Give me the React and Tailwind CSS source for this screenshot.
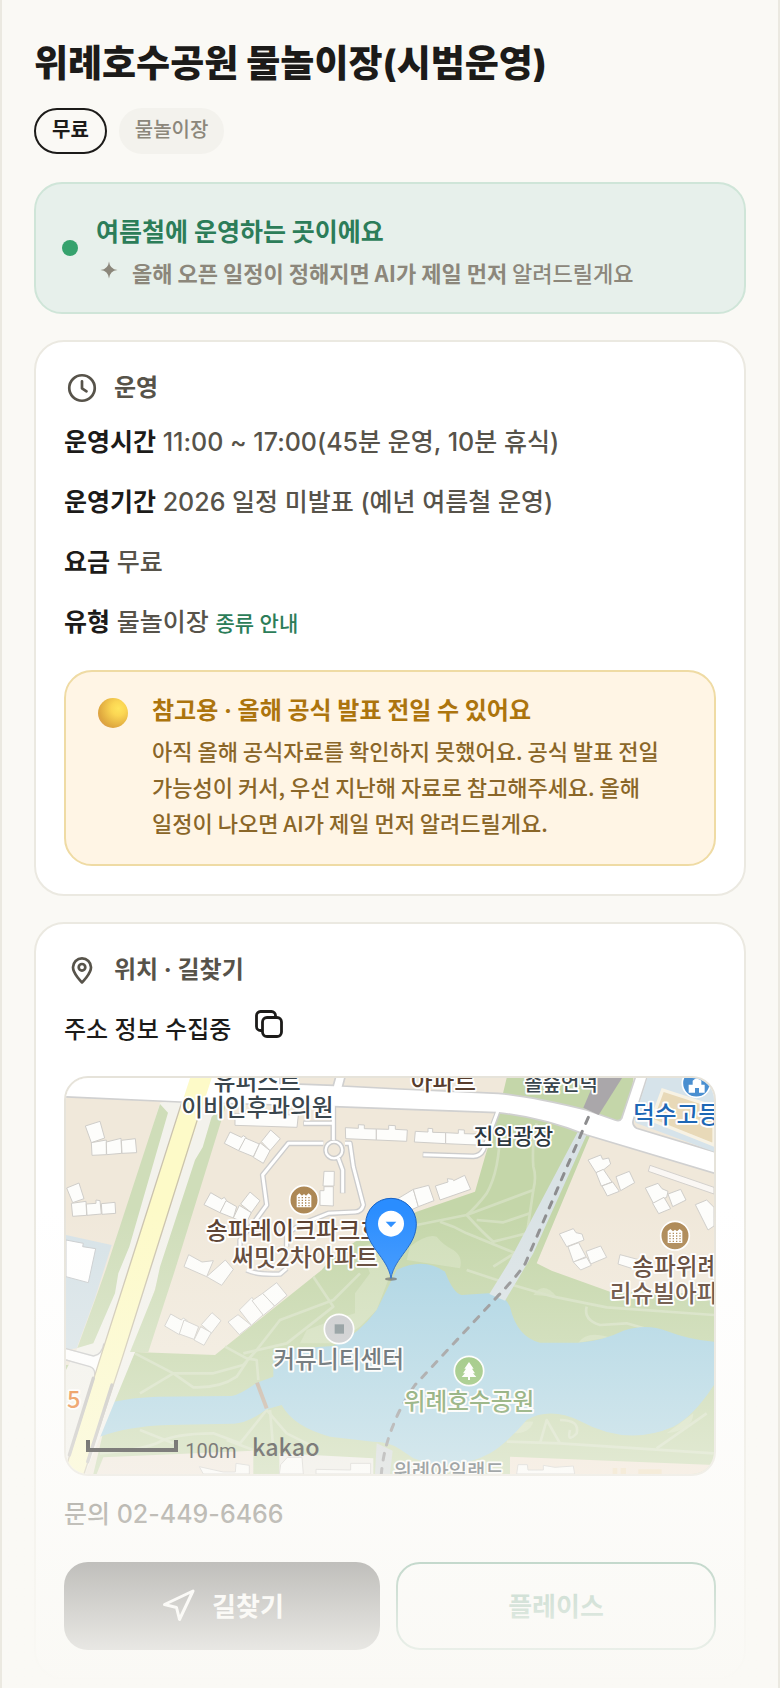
import { Navigation } from 'lucide-react';

const HOURS = [
  { label: '운영시간', value: '11:00 ~ 17:00(45분 운영, 10분 휴식)' },
  { label: '운영기간', value: '2026 일정 미발표 (예년 여름철 운영)' },
  { label: '요금', value: '무료' },
  { label: '유형', value: '물놀이장', link: '종류 안내' },
];

// Building footprints on the map, each one a closed outline
const BUILDINGS = [
  'M136 198 L180 184 L194 234 L154 248 Z',
  'M154 248 L199 240 L199 284 L156 286 Z',
  'M199 246 L243 235 L245 280 L200 284 Z',
  'M244 241 L286 236 L290 278 L246 280 Z',
  'M80 384 L117 369 L122 385 L132 416 L98 428 Z',
  'M94 430 L138 424 L140 466 L98 469 Z',
  'M139 432 L168 430 L168 420 L180 422 L184 462 L141 466 Z',
  'M184 431 L225 427 L227 460 L186 463 Z',
  'M570 216 L604 232 L610 227 L619 233 L596 272 L553 250 Z',
  'M616 234 L658 252 L640 290 L596 272 Z',
  'M692 210 L721 236 L690 272 L664 245 Z',
  'M660 248 L690 272 L670 310 L640 292 Z',
  'M512 398 L545 417 L553 412 L560 422 L540 458 L492 434 Z',
  'M558 422 L590 440 L580 474 L540 458 Z',
  'M630 396 L660 422 L634 458 L602 432 Z',
  'M598 436 L634 458 L618 490 L580 474 Z',
  'M585 160 L775 165 L771 202 L585 196 Z',
  'M852 334 L883 334 L882 378 L849 378 Z',
  'M852 380 L880 380 L880 438 L840 436 L840 392 L852 392 Z',
  'M916 203 L955 205 L955 194 L973 195 L973 206 L1009 207 L1009 240 L917 236 Z',
  'M1009 207 L1046 208 L1046 196 L1066 197 L1066 208 L1102 210 L1100 244 L1009 240 Z',
  'M1126 214 L1164 216 L1164 205 L1178 206 L1178 217 L1217 218 L1217 251 L1123 246 Z',
  'M1217 218 L1255 220 L1255 209 L1273 210 L1273 221 L1310 222 L1310 255 L1217 251 Z',
  'M1070 418 L1120 388 L1135 440 L1100 456 Z',
  'M1120 388 L1166 376 L1182 422 L1135 440 Z',
  'M1186 378 L1224 366 L1222 356 L1238 358 L1241 362 L1274 346 L1292 388 L1200 420 Z',
  'M1644 300 L1682 285 L1688 298 L1706 294 L1712 312 L1690 330 L1668 338 Z',
  'M1668 338 L1690 328 L1716 366 L1684 378 Z',
  'M1686 378 L1718 366 L1738 394 L1702 408 Z',
  'M1728 350 L1768 334 L1784 368 L1742 392 Z',
  'M1816 384 L1854 370 L1866 386 L1884 394 L1880 412 L1840 430 Z',
  'M1838 430 L1872 412 L1892 446 L1856 461 Z',
  'M1884 402 L1922 388 L1938 420 L1898 440 Z',
  'M1966 434 L2000 420 L2022 442 L2022 498 L2004 510 Z',
  'M1558 522 L1600 506 L1608 518 L1626 522 L1632 540 L1580 560 Z',
  'M1584 560 L1616 548 L1638 590 L1600 606 Z',
  'M1638 574 L1682 558 L1700 592 L1652 612 Z',
  'M1600 606 L1640 592 L1654 616 L1622 630 Z',
  'M1740 584 L1800 600 L1790 630 L1734 612 Z',
  'M392 762 L424 780 L430 774 L442 782 L418 824 L374 798 Z',
  'M432 780 L476 800 L462 838 L418 822 Z',
  'M516 758 L543 782 L514 820 L484 794 Z',
  'M482 800 L514 818 L492 856 L462 840 Z',
  'M446 584 L486 606 L520 602 L500 650 L432 620 Z',
  'M500 650 L545 676 L580 628 L556 600 Z',
  'M564 786 L594 764 L634 796 L598 824 Z',
  'M598 750 L636 712 L670 764 L634 796 Z',
  'M636 722 L668 700 L704 738 L670 766 Z',
  'M668 700 L710 668 L741 706 L704 738 Z',
  'M718 1242 L722 1214 L742 1192 L786 1192 L790 1242 Z',
  'M828 1242 L828 1228 L932 1230 L932 1210 L992 1210 L992 1242 Z',
  'M478 1220 L550 1236 L586 1236 L588 1210 L628 1216 L628 1242 L490 1242 Z',
  'M1430 1242 L1434 1214 L1462 1214 L1464 1230 L1510 1230 L1510 1216 L1545 1222 L1600 1218 L1604 1242 Z',
];

const TRAILS = [
  'M1380 200 Q1380 330 1340 400 Q1310 440 1280 465 L1130 495',
  'M1280 465 L1480 390 Q1490 350 1480 320 Q1475 250 1490 190',
  'M1280 465 Q1330 520 1360 545 L1460 520',
  'M1310 480 L1390 487 L1470 460',
  'M1480 390 L1455 560 L1360 620',
  'M1200 485 L1240 500 L1280 520 L1440 585',
  'M1280 630 L1400 670 L1540 710 L1700 742 L2022 765',
  'M1640 740 Q1630 780 1680 795 L1760 790 L1830 810',
  'M285 880 L400 940 L520 940 L610 915 L650 870 L720 780 L880 720 L960 640',
  'M300 1000 L400 940 L460 982 Q540 985 590 950 L620 905',
  'M555 860 L620 895 L650 900 L655 960',
  'M610 880 L740 850 L880 740 L820 650',
  'M180 1180 Q300 1170 350 1150 Q400 1120 520 1120 L600 1150 L680 1050 L740 1120 L820 1160',
  'M300 1110 L400 1150 M560 1140 L640 1170 M690 1050 L700 1170',
  'M1400 1145 L1560 1150 L2022 1180',
  'M1500 1150 L1520 1080 L1560 1150 M1560 1080 Q1620 1080 1610 1120 Q1580 1150 1590 1110 M1850 1165 L2000 1060',
];

const LABELS = [
  { text: '유퍼스트', x: 652, y: 90, size: 71, fill: '#3a464d' },
  { text: '이비인후과의원', x: 652, y: 168, size: 71, fill: '#3a464d' },
  { text: '아파트', x: 1210, y: 90, size: 71, fill: '#573c2c' },
  { text: '솔숲언덕', x: 1563, y: 94, size: 60, fill: '#3a464d' },
  { text: '진입광장', x: 1420, y: 252, size: 65, fill: '#2d383f' },
  { text: '써밋2차아파트', x: 795, y: 617, size: 72, fill: '#573c2c' },
  { text: '커뮤니티센터', x: 896, y: 925, size: 71, fill: '#3a464d' },
  { text: '위례호수공원', x: 1287, y: 1051, size: 71, fill: '#5f8c43' },
  { text: '위례아일랜드', x: 1226, y: 1257, size: 60, fill: '#3a464d' },
  { text: '송파레이크파크호', x: 497, y: 537, size: 72, fill: '#573c2c', anchor: 'start' },
  { text: '송파위례', x: 1777, y: 644, size: 71, fill: '#573c2c', anchor: 'start' },
  { text: '리슈빌아파트', x: 1709, y: 725, size: 71, fill: '#573c2c', anchor: 'start' },
  { text: '덕수고등학교', x: 1779, y: 190, size: 71, fill: '#1d67b5', anchor: 'start' },
  { text: '5', x: 101, y: 1045, size: 71, fill: '#e8731c' },
];

function ApartmentMarker({ x, y }) {
  return (
    <g transform={`translate(${x} ${y})`}>
      <circle r="43" fill="#ad8855" stroke="#fff" strokeWidth="5" />
      <path d="M-22 22 V-13 L-14 -20 L-6 -13 L0 -18 L6 -13 L14 -20 L22 -13 V22 Z" fill="#fff" />
      <path
        d="M-17 -7 H18 M-17 1 H18 M-17 9 H18 M-17 17 H18"
        stroke="#ad8855"
        strokeWidth="4"
        strokeDasharray="4 6"
      />
    </g>
  );
}

function KakaoMap() {
  return (
    <svg
      viewBox="78 54 1944 1188"
      preserveAspectRatio="xMidYMid slice"
      className="block h-full w-full"
      role="img"
      aria-label="위례호수공원 지도"
    >
      <rect x="78" y="54" width="1944" height="1188" fill="#f0e8da" />

      {/* Parks */}
      <g fill="#c4d6a9">
        <path d="M1400 54 L1780 54 L1760 240 L1655 215 L1490 610 L1535 632 L1710 695 L2022 702 V1242 H160 L210 1030 L285 876 L525 885 L845 630 L870 600 L945 545 L1060 490 L1130 455 L1305 395 L1335 290 L1375 158 Z" />
        <path d="M78 915 Q110 910 125 930 L105 985 L78 1010 Z" />
      </g>
      <g fill="#d0deb9">
        <path d="M960 560 L1040 540 L1060 620 L1010 750 L960 800 L880 850 L780 850 L800 810 L880 780 L945 760 L945 700 L990 640 Z" />
        <path d="M1110 560 Q1160 520 1190 530 Q1210 555 1240 570 Q1270 590 1260 625 L1100 600 Z" />
        <path d="M1480 705 Q1510 660 1550 710 Z" />
        <path d="M1615 848 Q1640 810 1710 832 Z" />
        <path d="M1420 1120 Q1430 1080 1480 1085 Q1470 1120 1420 1120 Z" />
        <path d="M1880 1120 Q1960 1110 1960 1060 Z" />
      </g>
      <g fill="none" stroke="#d3dfbf" strokeWidth="8" strokeLinejoin="round">
        {TRAILS.map((d) => (
          <path key={d} d={d} />
        ))}
      </g>

      {/* Lots on the bottom edge */}
      <path d="M190 1192 L640 1172 V1242 H170 Z" fill="#f0e6da" />
      <path d="M718 1180 L1000 1195 V1242 H718 Z" fill="#eeece6" />
      <path d="M1410 1190 L2022 1215 V1242 H1410 Z" fill="#f2e4d4" />
      <path d="M1718 1224 H1732 V1242 H1718 Z M1742 1224 H1758 V1242 H1742 Z M1795 1228 H1865 V1242 H1795 Z" fill="#efdcb8" />

      {/* Lake */}
      <path
        d="M78 1060 L205 1028 Q280 1012 350 1010 L575 1008 Q600 1004 650 968 L700 950 L700 870 L880 858 Q960 820 1010 750 Q1040 690 1070 630 Q1150 590 1215 635 Q1240 700 1265 705 L1345 700 Q1390 700 1410 740 Q1430 830 1500 848 L1615 848 Q1690 842 1750 812 Q1820 790 1880 813 Q1950 840 2022 845 V975 Q1960 1070 1900 1100 Q1760 1160 1620 1083 Q1530 1040 1460 1080 Q1400 1150 1350 1180 Q1240 1240 1120 1195 L1080 1168 Q1050 1145 1000 1145 L870 1130 Q760 1100 725 1035 L680 1048 Q620 1092 580 1091 L380 1095 Q260 1100 180 1130 L78 1180 Z"
        fill="#a9d3e3"
      />
      <path d="M651 968 L680 1045" stroke="#bfa996" strokeWidth="12" />

      {/* Walking bridge across the lake */}
      <path d="M1615 212 L1642 220 L1480 580 L1395 722 L1348 702 L1405 610 Z" fill="#d9e2e5" />
      <path d="M1010 1150 L1058 1172 L1050 1242 L1005 1242 Z" fill="#cfd6d8" />

      {/* Left side: parking lot, verges and the main road */}
      <path d="M78 525 L215 555 L165 715 L110 865 L78 870 Z" fill="#d6e2e7" />
      <path d="M78 540 L130 550 L128 560 L167 566 L145 668 L78 650 Z" fill="#fff" stroke="#c9ccce" strokeWidth="3" />
      <path
        d="M360 128 L430 118 L540 118 L475 320 L360 640 L285 876 L135 1242 H78 V930 L112 865 L165 800 L210 640 Z"
        fill="#f3f2ec"
      />
      <path d="M360 132 L384 158 L268 560 L235 640 L225 700 L160 850 L112 864 L165 720 L197 630 Z" fill="#cfddb9" />
      <path d="M515 170 L560 130 L405 630 L325 876 L270 876 L345 690 L360 620 L465 300 L488 262 Z" fill="#cfddb9" />
      <path d="M78 868 L165 890 Q190 885 195 850 L215 880 L165 960 Q165 925 150 920 L78 898 Z" fill="#fff" />
      <path d="M78 866 L160 888 Q185 885 192 850 M78 900 L150 920 Q166 926 164 945" fill="none" stroke="#c9c9c9" strokeWidth="4" />

      {/* Streets */}
      <path
        d="M60 110 L420 126 L880 140 L1370 158 Q1500 170 1640 225 L2040 345 V280 L1790 205 Q1775 195 1780 180 L1825 40 H1790 L1745 175 Q1740 185 1725 180 L1640 150 Q1480 110 1375 100 L1080 87 L908 78 L918 40 H890 L880 76 L720 70 L720 40 L40 40 Z"
        fill="#fff"
        stroke="#d0d0d0"
        strokeWidth="5"
      />
      <path d="M450 54 H515 L330 630 L248 890 L132 1242 H78 V1225 L182 890 L265 630 Z" fill="#fdfac8" />
      <path
        d="M425 128 L265 630 L182 890 L78 1222 M478 160 L330 630 L248 890 L132 1242"
        fill="none"
        stroke="#cbc3ae"
        strokeWidth="4"
      />
      <path d="M160 955 L88 1185 M216 975 L143 1205" stroke="#c0bebb" strokeWidth="10" strokeLinecap="round" />

      {/* Lanes inside the apartment complex */}
      <g fill="none" strokeLinejoin="round">
        <path
          d="M880 140 V240 M790 190 H880 M850 250 H745 L668 345 L680 435 L640 490 L600 540 L600 590 M915 250 H930 L940 320 L970 435 Q965 455 945 456 L865 460 L790 490 L740 520 L740 560 M895 295 L908 330 V400 M1372 160 L1330 270 Q1320 288 1300 289 L1148 284 M620 630 Q650 645 720 642 L740 625"
          stroke="#ccc"
          strokeWidth="17"
        />
        <circle cx="882" cy="270" r="25" stroke="#ccc" strokeWidth="15" fill="#f0e8da" />
        <path
          d="M880 136 V240 M792 190 H880 M850 250 H745 L668 345 L680 435 L640 490 L600 540 L600 590 M915 250 H930 L940 320 L970 435 Q965 455 945 456 L865 460 L790 490 L740 520 L740 560 M895 295 L908 330 V398 M1374 152 L1330 270 Q1320 288 1300 289 L1150 284 M620 630 Q650 645 720 642 L740 625"
          stroke="#fff"
          strokeWidth="9"
        />
        <circle cx="882" cy="270" r="25" stroke="#fff" strokeWidth="7" />
      </g>
      <path d="M1830 316 L2022 382 V402 L1825 334 Z" fill="#faf7f4" stroke="#d3d0cc" strokeWidth="3" />

      <g fill="#fdfdfb" stroke="#cfcdc9" strokeWidth="3" strokeLinejoin="round">
        {BUILDINGS.map((d) => (
          <path key={d} d={d} />
        ))}
      </g>

      {/* School grounds */}
      <path d="M1822 54 H2022 V275 L1790 190 Q1782 184 1786 170 Z" fill="#d6e3ea" />
      <path d="M1868 90 L2022 140 V255 L1835 180 Z" fill="#e8d9b8" stroke="#f7f2e4" strokeWidth="10" />

      {/* Tunnel and walkway line */}
      <path d="M1668 54 H1746 L1676 165 L1630 143 Z" fill="#aaa7aa" />
      <path
        d="M1645 172 L1455 612 Q1430 650 1370 712 L1125 975 Q1080 1040 1058 1100 Q1030 1170 1024 1242"
        fill="none"
        stroke="#8c8c8e"
        strokeWidth="9"
        strokeLinecap="round"
        strokeDasharray="20 26"
      />

      {/* Place markers */}
      <ApartmentMarker x={792} y={420} />
      <ApartmentMarker x={1905} y={527} />
      <circle cx="1969" cy="70" r="42" fill="#4a8fd0" stroke="#fff" strokeWidth="5" />
      <path d="M1946 98 V74 H1958 V62 L1971 52 L1984 62 V74 H1994 V98 H1977 V84 H1965 V98 Z" fill="#fff" />
      <circle cx="897" cy="807" r="44" fill="#c6c7ca" stroke="#fff" strokeWidth="5" />
      <rect x="884" y="793" width="28" height="28" fill="#7b898d" />
      <circle cx="1287" cy="933" r="44" fill="#83b95f" stroke="#fff" strokeWidth="5" />
      <path d="M1287 906 L1301 926 H1296 L1305 940 H1299 L1309 951 H1290 V960 H1284 V951 H1265 L1275 940 H1269 L1278 926 H1273 Z" fill="#fff" />

      <g
        fontFamily="'Noto Sans CJK KR', sans-serif"
        fontWeight="500"
        stroke="#fff"
        strokeWidth="11"
        strokeLinejoin="round"
        paintOrder="stroke"
      >
        {LABELS.map((label) => (
          <text
            key={label.text}
            x={label.x}
            y={label.y}
            fontSize={label.size}
            fill={label.fill}
            textAnchor={label.anchor || 'middle'}
          >
            {label.text}
          </text>
        ))}
      </g>

      {/* Pin */}
      <ellipse cx="1053" cy="657" rx="18" ry="5" fill="#555" opacity="0.7" />
      <path
        d="M1053 655 C1042 590 977 560 977 491 A76 76 0 0 1 1129 491 C1129 560 1064 590 1053 655 Z"
        fill="#2a8dff"
        stroke="#1560c4"
        strokeWidth="3"
      />
      <circle cx="1053" cy="491" r="39" fill="#fff" />
      <path d="M1037 485 H1069 L1053 502 Z" fill="#2a8dff" />

      {/* Scale and credit */}
      <path d="M144 1140 V1170 H408 V1140" fill="none" stroke="#000" strokeWidth="12" />
      <text x="436" y="1193" fontSize="60" fontFamily="Roboto, sans-serif" fontWeight="400">
        100m
      </text>
      <text x="636" y="1187" fontSize="70" fontFamily="'Noto Sans CJK KR', sans-serif" fontWeight="500">
        kakao
      </text>
    </svg>
  );
}

function ClockIcon() {
  return (
    <svg viewBox="0 0 24 24" className="size-9" fill="none" stroke="currentColor" strokeLinecap="round" strokeLinejoin="round" aria-hidden="true">
      <circle cx="12" cy="12" r="8.5" strokeWidth="1.8" />
      <path d="M12 7.5 V12.2 L15 14.2" strokeWidth="1.8" />
    </svg>
  );
}

function PinIcon() {
  return (
    <svg viewBox="0 0 24 24" className="size-9" fill="none" stroke="currentColor" strokeWidth="1.8" strokeLinejoin="round" aria-hidden="true">
      <path d="M12 20.3 C12 20.3 6 14.5 6 10.2 A6 6 0 0 1 18 10.2 C18 14.5 12 20.3 12 20.3 Z" />
      <circle cx="12" cy="10.2" r="2.2" />
    </svg>
  );
}

function CardTitle({ icon, children }) {
  return (
    <h2 className="flex h-9 items-center gap-[14px] text-2xl font-bold text-[#57534a]">
      {icon}
      {children}
    </h2>
  );
}

export default function App() {
  return (
    <main className="relative min-h-screen overflow-hidden break-keep border-x-2 border-[#ebe9e1] bg-[#faf9f5] px-8 pt-10 pb-2 font-['Inter','Noto_Sans_CJK_KR',sans-serif] font-medium text-[#1c1b19]">
      <h1 className="text-[37px] leading-12 font-extrabold">위례호수공원 물놀이장(시범운영)</h1>

      <div className="mt-5 flex gap-3 text-xl leading-7">
        <span className="rounded-full border-2 border-[#1c1b19] px-4 pt-1.5 pb-2 font-bold">무료</span>
        <span className="rounded-full border-2 border-[#f3f2ed] bg-[#f3f2ed] px-[14px] pt-1.5 pb-2 text-[#8c877b]">물놀이장</span>
      </div>

      {/* Season banner */}
      <section className="mt-7 flex items-center gap-[18px] rounded-[28px] border-2 border-[#cfe5d8] bg-[#e7f0eb] px-[26px] py-[22px]">
        <span className="size-4 shrink-0 rounded-full bg-[#36a26d]" />
        <div className="pt-1.5">
          <h2 className="text-[25px] leading-10 font-bold text-[#2c7d59]">여름철에 운영하는 곳이에요</h2>
          <p className="mt-0.5 flex items-center gap-[14px] pl-1 font-['Noto_Sans_CJK_KR',sans-serif] text-[22px] leading-9 text-[#8c877b]">
            <svg viewBox="0 0 18 18" className="mb-1 size-[18px]" fill="currentColor" aria-hidden="true">
              <path d="M9 0.5 Q9.8 8.2 17.5 9 Q9.8 9.8 9 17.5 Q8.2 9.8 0.5 9 Q8.2 8.2 9 0.5 Z" />
              <circle cx="9" cy="9" r="2.4" />
            </svg>
            <span>
              <b>올해 오픈 일정이 정해지면 AI가 제일 먼저</b> 알려드릴게요
            </span>
          </p>
        </div>
      </section>

      {/* Opening hours */}
      <section className="mt-[26px] rounded-[30px] border-2 border-[#ebe9e1] bg-white p-7">
        <CardTitle icon={<ClockIcon />}>운영</CardTitle>
        <div className="mt-4 flex flex-col gap-5 text-[25px] leading-10 text-[#57534a]">
          {HOURS.map((row) => (
            <p key={row.label}>
              <b className="text-[#1c1b19]">{row.label}</b> {row.value}
              {row.link && (
                <>
                  {' '}
                  <a href="#types" className="text-[21px] leading-none text-[#2c7d59]">
                    {row.link}
                  </a>
                </>
              )}
            </p>
          ))}
        </div>

        <div className="mt-7 flex gap-6 rounded-[28px] border-2 border-[#efdba4] bg-[#fff5e5] px-8 pt-5 pb-6">
          <span className="mt-1.5 size-[30px] shrink-0 rounded-full bg-[radial-gradient(circle_at_68%_35%,#ffe45c_0%,#fbd653_25%,#dfa83f_68%,#d98c5e_100%)]" />
          <div>
            <h3 className="text-2xl leading-[38px] font-bold text-[#ac740d]">참고용 · 올해 공식 발표 전일 수 있어요</h3>
            <p className="mt-0.5 font-['Noto_Sans_CJK_KR',sans-serif] text-[22px] leading-9 text-[#8a6628]">
              아직 올해 공식자료를 확인하지 못했어요. 공식 발표 전일 가능성이 커서, 우선 지난해 자료로 참고해주세요. 올해
              일정이 나오면 AI가 제일 먼저 알려드릴게요.
            </p>
          </div>
        </div>
      </section>

      {/* Location */}
      <section className="mt-[26px] rounded-[30px] border-2 border-[#ebe9e1] bg-white p-7">
        <CardTitle icon={<PinIcon />}>위치 · 길찾기</CardTitle>
        <div className="mt-[18px] flex h-12 items-center gap-[22px] text-2xl">
          <span>주소 정보 수집중</span>
          <button type="button" aria-label="주소 복사" className="mb-3">
            <svg viewBox="0 0 32 32" className="size-8" fill="none" stroke="currentColor" strokeWidth="2.8" aria-hidden="true">
              <rect x="9.5" y="9.5" width="19" height="19" rx="4.5" />
              <path d="M9.5 22.5 H7.5 A4 4 0 0 1 3.5 18.5 V7.5 A4 4 0 0 1 7.5 3.5 H18.5 A4 4 0 0 1 22.5 7.5 V9.5" />
            </svg>
          </button>
        </div>

        <div className="mt-[22px] h-[400px] overflow-hidden rounded-3xl border-2 border-[#e6e3da]">
          <KakaoMap />
        </div>

        <p className="mt-[18px] text-[25px] leading-10 text-[#57534a]">문의 02-449-6466</p>

        <div className="mt-7 flex h-[88px] gap-4 text-[26px] font-bold">
          <button type="button" className="flex flex-1 items-center justify-center gap-4 rounded-3xl bg-[#1c1b19] text-white">
            <Navigation className="size-9" strokeWidth={2} />
            길찾기
          </button>
          <button type="button" className="flex-1 rounded-3xl border-2 border-[#2c7d59] text-[#2c7d59]">
            플레이스
          </button>
        </div>
      </section>

      {/* Fade towards the bottom of the page */}
      <div className="pointer-events-none absolute inset-x-0 bottom-0 h-[480px] bg-linear-to-b from-[#faf9f5]/0 to-[#faf9f5]" />
    </main>
  );
}
